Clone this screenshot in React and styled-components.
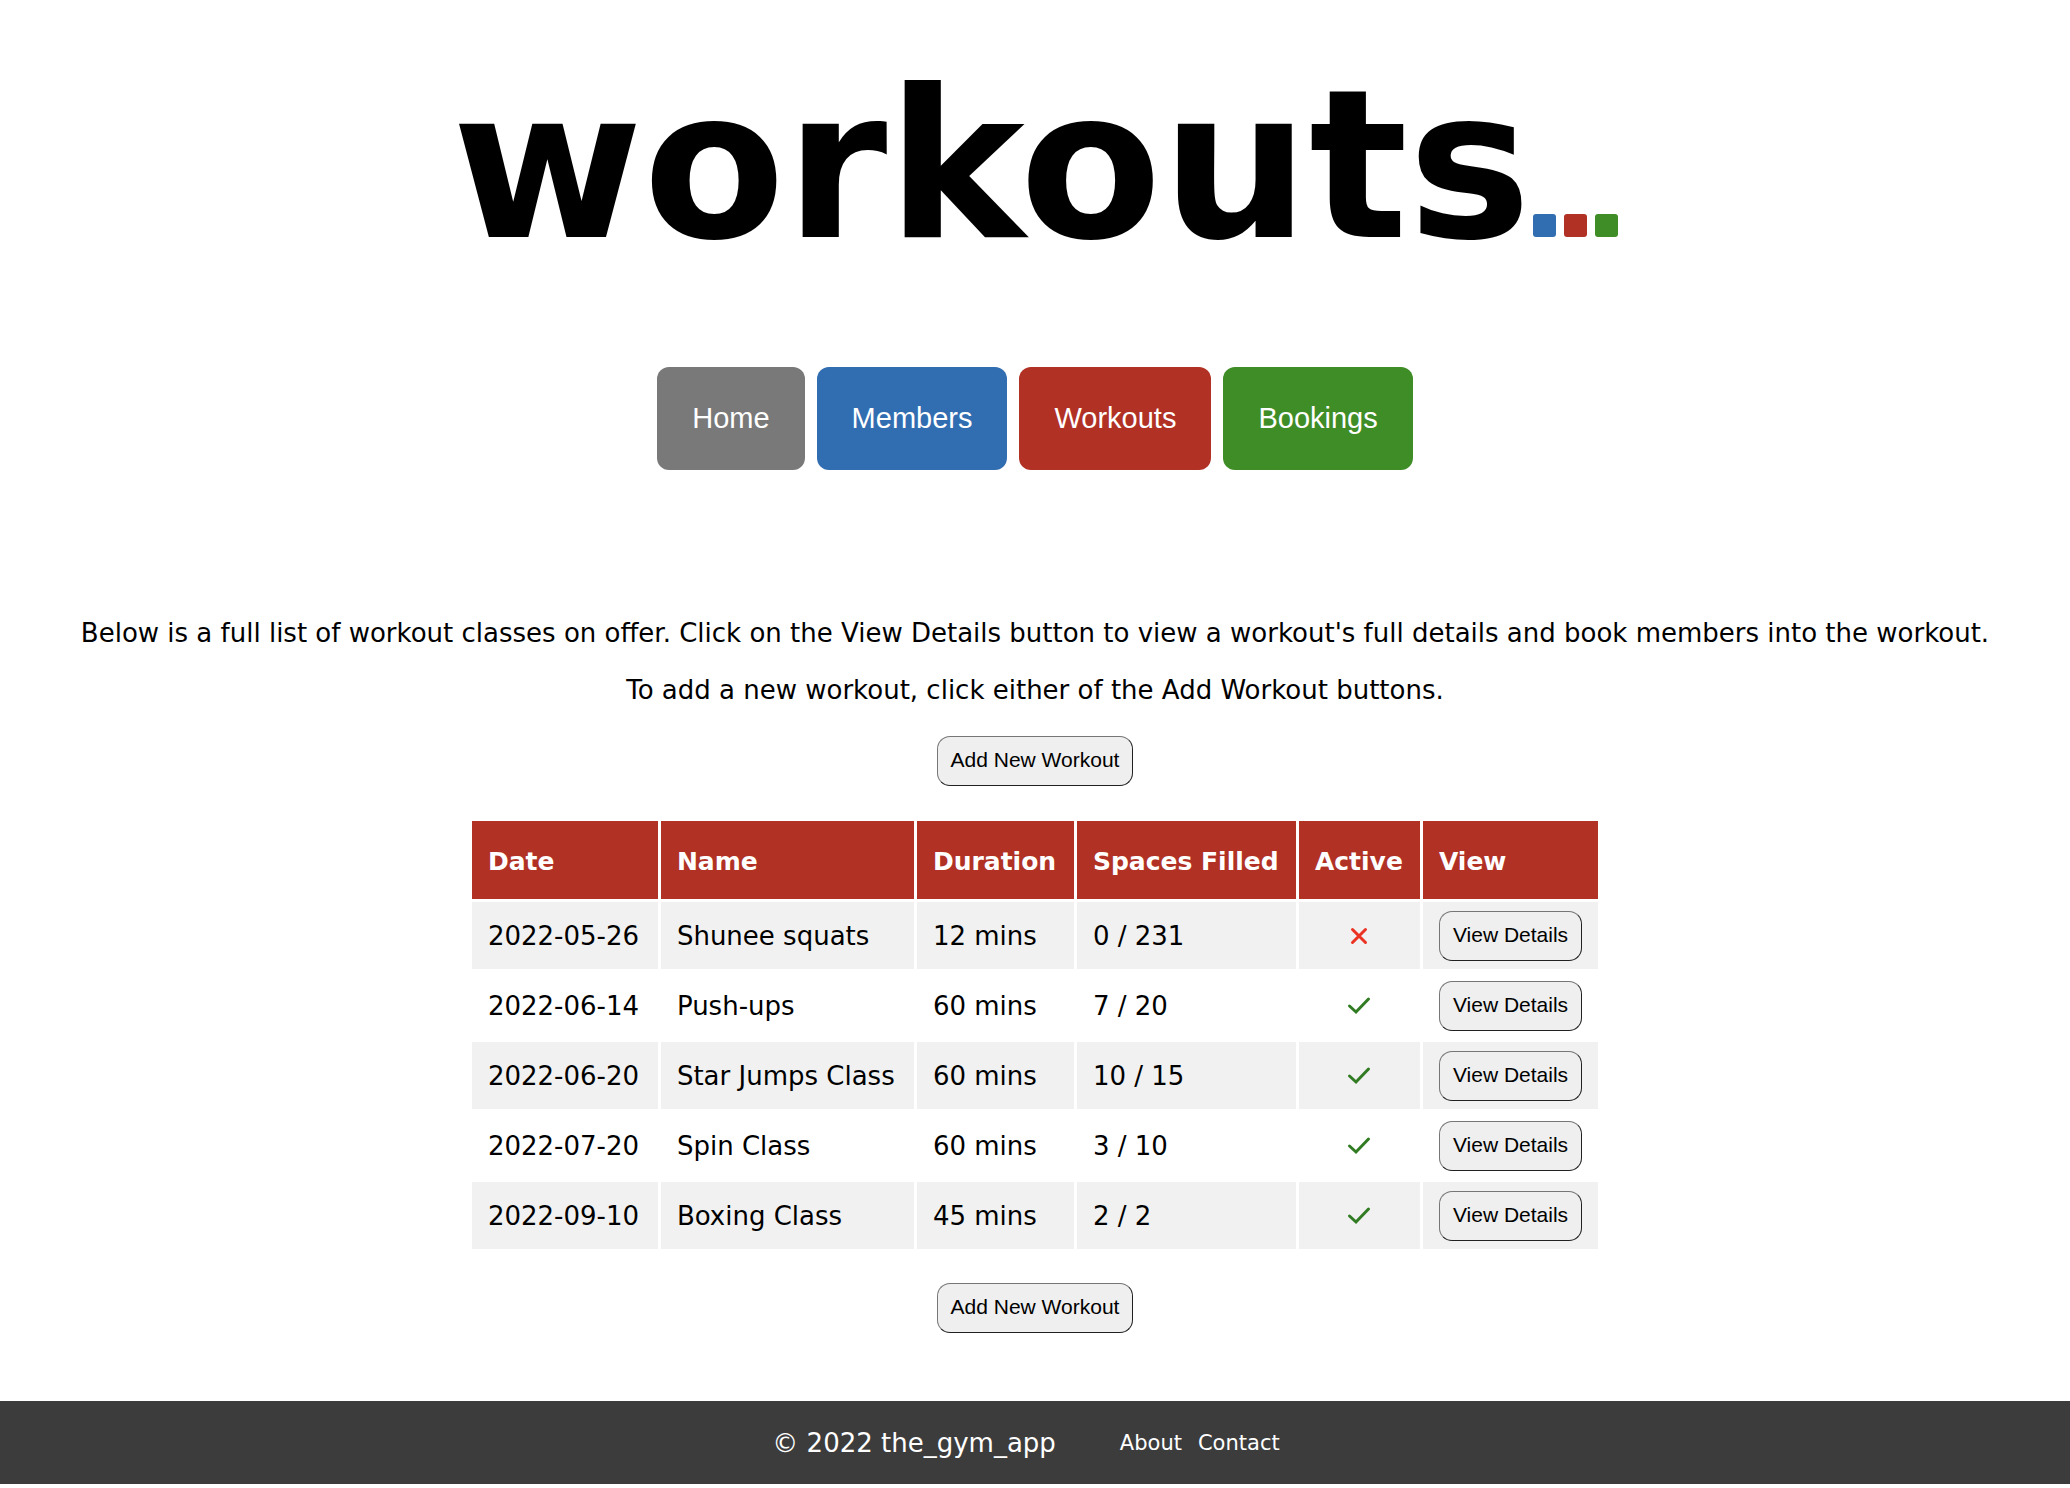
import React from "react";
import styled, { createGlobalStyle } from "styled-components";

const colors = {
  grey: "#797979",
  blue: "#316db1",
  red: "#b13125",
  green: "#3f8d27",
};

const GlobalStyle = createGlobalStyle`
  *, *::before, *::after { box-sizing: border-box; }
  body {
    margin: 0;
    background: #fff;
    color: #000;
    font-family: Verdana, "DejaVu Sans", sans-serif;
    font-size: 26px;
    line-height: 31px;
  }
`;

const Page = styled.div`
  display: flex;
  flex-direction: column;
  align-items: center;
`;

const Header = styled.header`
  display: flex;
  flex-direction: column;
  align-items: center;
  gap: 78px;
  padding-top: 42px;
`;

const Title = styled.h1`
  display: flex;
  align-items: baseline;
  margin: 0;
  font-size: 207px;
  font-weight: bold;
  line-height: 247px;
`;

const Dots = styled.span`
  display: flex;
  gap: 8px;
  margin-left: 2px;
`;

const Dot = styled.span`
  width: 23px;
  height: 23px;
  border-radius: 3px;
  background: ${(p) => p.$color};
`;

const Nav = styled.nav`
  display: flex;
  gap: 12px;
`;

const NavButton = styled.button`
  padding: 35px;
  border: 0;
  border-radius: 12px;
  background: ${(p) => p.$color};
  color: #fff;
  font-family: Arial, "Liberation Sans", sans-serif;
  font-size: 29px;
  line-height: 33px;
  cursor: pointer;
`;

const Main = styled.main`
  display: flex;
  flex-direction: column;
  align-items: center;
  padding: 148px 24px 68px;
`;

const Intro = styled.div`
  display: flex;
  flex-direction: column;
  gap: 26px;
  margin-bottom: 30px;
  text-align: center;

  p { margin: 0; }
`;

const Button = styled.button`
  padding: 11px 13px 13px;
  border: 1px solid;
  border-color: #767676 #212121 #212121 #767676;
  border-radius: 13px;
  background: #efefef;
  color: #000;
  font-family: Arial, "Liberation Sans", sans-serif;
  font-size: 21px;
  line-height: 24px;
  white-space: nowrap;
  cursor: pointer;
`;

const Table = styled.table`
  margin: 32px 0 31px;
  border-collapse: separate;
  border-spacing: 3px;
`;

const HeadCell = styled.th`
  width: ${(p) => p.$width}px;
  height: 78px;
  padding: 2px 16px 0;
  background: ${colors.red};
  color: #fff;
  font-size: 25px;
  text-align: left;
  white-space: nowrap;
`;

const Row = styled.tr`
  &:nth-child(odd) td { background: #f1f1f1; }
`;

const Cell = styled.td`
  height: 67px;
  padding: 2px 16px 0;
  vertical-align: middle;
  white-space: nowrap;
`;

const ControlCell = styled(Cell)`
  padding: 0 16px;

  svg { display: block; margin: 0 auto; }
  button { display: block; }
`;

const Footer = styled.footer`
  display: flex;
  align-items: center;
  justify-content: center;
  gap: 64px;
  align-self: stretch;
  padding: 27px 18px 25px 0;
  background: #3c3c3c;
  color: #fff;
`;

const FooterLinks = styled.nav`
  display: flex;
  gap: 16px;
  font-size: 21px;

  a { color: inherit; text-decoration: none; }
`;

const nav = [
  ["Home", colors.grey],
  ["Members", colors.blue],
  ["Workouts", colors.red],
  ["Bookings", colors.green],
];

const columns = [
  ["Date", 186],
  ["Name", 253],
  ["Duration", 157],
  ["Spaces Filled", 219],
  ["Active", 121],
  ["View", 175],
];

const workouts = [
  { date: "2022-05-26", name: "Shunee squats", mins: 12, spaces: "0 / 231", active: false },
  { date: "2022-06-14", name: "Push-ups", mins: 60, spaces: "7 / 20", active: true },
  { date: "2022-06-20", name: "Star Jumps Class", mins: 60, spaces: "10 / 15", active: true },
  { date: "2022-07-20", name: "Spin Class", mins: 60, spaces: "3 / 10", active: true },
  { date: "2022-09-10", name: "Boxing Class", mins: 45, spaces: "2 / 2", active: true },
];

function StatusIcon({ active }) {
  return (
    <svg
      width="26"
      height="26"
      viewBox="0 0 26 26"
      fill="none"
      stroke={active ? "#317c23" : "#eb3323"}
      strokeWidth="3"
      strokeLinecap="round"
      strokeLinejoin="miter"
      role="img"
      aria-label={active ? "Active" : "Inactive"}
    >
      {active ? <path d="M3.5 13 L10 19 L22.5 6" /> : <path d="M6.5 6.5 L19.5 19.5 M19.5 6.5 L6.5 19.5" />}
    </svg>
  );
}

export default function App() {
  return (
    <>
      <GlobalStyle />
      <Page>
        <Header>
          <Title>
            workouts
            <Dots>
              <Dot $color={colors.blue} />
              <Dot $color={colors.red} />
              <Dot $color={colors.green} />
            </Dots>
          </Title>
          <Nav>
            {nav.map(([label, color]) => (
              <NavButton key={label} type="button" $color={color}>{label}</NavButton>
            ))}
          </Nav>
        </Header>
        <Main>
          <Intro>
            <p>
              Below is a full list of workout classes on offer. Click on the View Details button to view a workout's full details and book members into the workout.
            </p>
            <p>To add a new workout, click either of the Add Workout buttons.</p>
          </Intro>
          <Button type="button">Add New Workout</Button>
          <Table>
            <thead>
              <tr>
                {columns.map(([label, width]) => (
                  <HeadCell key={label} scope="col" $width={width}>{label}</HeadCell>
                ))}
              </tr>
            </thead>
            <tbody>
              {workouts.map((w) => (
                <Row key={w.date}>
                  <Cell>{w.date}</Cell>
                  <Cell>{w.name}</Cell>
                  <Cell>{w.mins} mins</Cell>
                  <Cell>{w.spaces}</Cell>
                  <ControlCell><StatusIcon active={w.active} /></ControlCell>
                  <ControlCell><Button type="button">View Details</Button></ControlCell>
                </Row>
              ))}
            </tbody>
          </Table>
          <Button type="button">Add New Workout</Button>
        </Main>
        <Footer>
          <span>© 2022 the_gym_app</span>
          <FooterLinks>
            <a href="#about">About</a>
            <a href="#contact">Contact</a>
          </FooterLinks>
        </Footer>
      </Page>
    </>
  );
}
